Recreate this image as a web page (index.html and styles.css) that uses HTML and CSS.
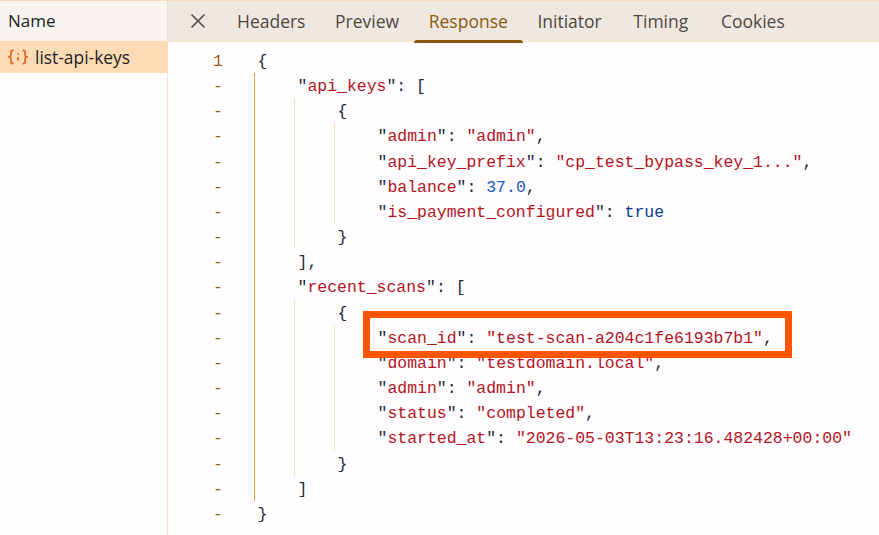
FILE: index.html
```html
<!DOCTYPE html>
<html lang="en">
<head>
    <meta charset="UTF-8">
    <meta name="viewport" content="width=device-width, initial-scale=1.0">
    <title>Network</title>
    <link rel="stylesheet" href="styles.css">
</head>
<body>
    <div class="panel">
        <div class="sidebar">
            <div class="side-head">Name</div>
            <div class="side-row">
                <svg class="json-icon" width="20" height="16" viewBox="0 0 20 16" fill="none" stroke="#f0642a" stroke-width="1.8">
                    <path d="M5.5 1.5H4.6C3.5 1.5 3 2.1 3 3.2V5.8C3 6.9 2.4 7.6 1 8C2.4 8.4 3 9.1 3 10.2V12.8C3 13.9 3.5 14.5 4.6 14.5H5.5"/>
                    <path d="M14.5 1.5H15.4C16.5 1.5 17 2.1 17 3.2V5.8C17 6.9 17.6 7.6 19 8C17.6 8.4 17 9.1 17 10.2V12.8C17 13.9 16.5 14.5 15.4 14.5H14.5"/>
                    <path d="M10 4.2V5.8M10 8V11.6"/>
                </svg>
                <span>list-api-keys</span>
            </div>
        </div>
        <div class="main">
            <div class="tabs">
                <svg class="close" width="16" height="16" viewBox="0 0 16 16" fill="none" stroke="#55504a" stroke-width="1.7"><path d="M1.5 1.5L14.5 14.5M14.5 1.5L1.5 14.5"/></svg>
                <div class="tab">Headers</div>
                <div class="tab">Preview</div>
                <div class="tab active">Response</div>
                <div class="tab">Initiator</div>
                <div class="tab timing">Timing</div>
                <div class="tab cookies">Cookies</div>
            </div>
            <div class="code">
                <div class="line"><span class="num">1</span><span class="text">{</span></div>
                <div class="line"><span class="num">-</span><i class="guide on"></i><span class="text">"<b class="k">api_keys</b>": [</span></div>
                <div class="line"><span class="num">-</span><i class="guide on"></i><i class="guide"></i><span class="text">{</span></div>
                <div class="line"><span class="num">-</span><i class="guide on"></i><i class="guide"></i><i class="guide"></i><span class="text">"<b class="k">admin</b>": <b class="k">"admin"</b>,</span></div>
                <div class="line"><span class="num">-</span><i class="guide on"></i><i class="guide"></i><i class="guide"></i><span class="text">"<b class="k">api_key_prefix</b>": <b class="k">"cp_test_bypass_key_1..."</b>,</span></div>
                <div class="line"><span class="num">-</span><i class="guide on"></i><i class="guide"></i><i class="guide"></i><span class="text">"<b class="k">balance</b>": <b class="n">37.0</b>,</span></div>
                <div class="line"><span class="num">-</span><i class="guide on"></i><i class="guide"></i><i class="guide"></i><span class="text">"<b class="k">is_payment_configured</b>": <b class="t">true</b></span></div>
                <div class="line"><span class="num">-</span><i class="guide on"></i><i class="guide"></i><span class="text">}</span></div>
                <div class="line"><span class="num">-</span><i class="guide on"></i><span class="text">],</span></div>
                <div class="line"><span class="num">-</span><i class="guide on"></i><span class="text">"<b class="k">recent_scans</b>": [</span></div>
                <div class="line"><span class="num">-</span><i class="guide on"></i><i class="guide"></i><span class="text">{</span></div>
                <div class="line"><span class="num">-</span><i class="guide on"></i><i class="guide"></i><i class="guide"></i><span class="text">"<b class="k">scan_id</b>": <b class="k">"test-scan-a204c1fe6193b7b1"</b>,</span></div>
                <div class="line"><span class="num">-</span><i class="guide on"></i><i class="guide"></i><i class="guide"></i><span class="text">"<b class="k">domain</b>": <b class="k">"testdomain.local"</b>,</span></div>
                <div class="line"><span class="num">-</span><i class="guide on"></i><i class="guide"></i><i class="guide"></i><span class="text">"<b class="k">admin</b>": <b class="k">"admin"</b>,</span></div>
                <div class="line"><span class="num">-</span><i class="guide on"></i><i class="guide"></i><i class="guide"></i><span class="text">"<b class="k">status</b>": <b class="k">"completed"</b>,</span></div>
                <div class="line"><span class="num">-</span><i class="guide on"></i><i class="guide"></i><i class="guide"></i><span class="text">"<b class="k">started_at</b>": <b class="k">"2026-05-03T13:23:16.482428+00:00"</b></span></div>
                <div class="line"><span class="num">-</span><i class="guide on"></i><i class="guide"></i><span class="text">}</span></div>
                <div class="line"><span class="num">-</span><i class="guide on"></i><span class="text">]</span></div>
                <div class="line"><span class="num">-</span><span class="text">}</span></div>
                <div class="highlight"></div>
            </div>
        </div>
    </div>
</body>
</html>
```

FILE: styles.css
```css
html, body {
    height: 100%;
}
body {
    margin: 0;
    overflow: hidden;
    background-color: #fffdff;
    font-family: "Open Sans", Arial, sans-serif;
    color: #1f1f1f;
}
.panel {
    display: flex;
    height: 100%;
    box-sizing: border-box;
    border-top: 1px solid #fddcb5;
}
.sidebar {
    flex: none;
    width: 167px;
    border-right: 1px solid #fde0c0;
}
.side-head {
    height: 40px;
    padding-left: 8px;
    line-height: 40px;
    font-size: 17px;
    background-color: #f8f4ef;
}
.side-row {
    display: flex;
    align-items: center;
    gap: 7px;
    height: 32px;
    padding-left: 8px;
    font-size: 17.4px;
    background-color: #fddcb5;
}
.json-icon {
    flex: none;
}
.main {
    flex: 1;
    min-width: 0;
}
.tabs {
    display: flex;
    align-items: center;
    height: 41px;
    box-sizing: border-box;
    padding-left: 22px;
    border-bottom: 1px solid #fde0c0;
    background-color: #efe8e1;
}
.close {
    flex: none;
    margin-right: 16.2px;
}
.tab {
    position: relative;
    padding: 0 14.8px;
    line-height: 42px;
    font-size: 17.5px;
    font-weight: 500;
    color: #4f4840;
}
.tab.active {
    color: #8a5a10;
}
.tab.active::after {
    content: "";
    position: absolute;
    left: 0;
    right: 0;
    bottom: -1px;
    height: 3px;
    border-radius: 3px 3px 0 0;
    background-color: #8a5a10;
}
.timing {
    margin-left: 2px;
}
.cookies {
    margin-left: 3px;
}
.code {
    position: relative;
    padding-top: 6px;
    font-family: "Liberation Mono", monospace;
    font-size: 16.48px;
}
.line {
    display: flex;
    height: 25.17px;
    line-height: 25.17px;
    white-space: pre;
}
.num {
    flex: none;
    width: 86px;
    box-sizing: border-box;
    padding-top: 1px;
    padding-right: 31px;
    text-align: right;
    color: #9a5b0a;
}
.guide {
    flex: none;
    width: 40px;
    box-sizing: border-box;
    border-left: 1px solid #fddcb5;
}
.guide.on {
    border-left-color: #e8a24a;
}
.text {
    padding-top: 1px;
    padding-left: 3.5px;
    color: #1d2a3a;
}
.text b {
    font-weight: normal;
}
.k {
    color: #b3141d;
}
.n {
    color: #1a56c4;
}
.t {
    color: #0b3f91;
}
.highlight {
    position: absolute;
    left: 195px;
    top: 269px;
    width: 415px;
    height: 33px;
    border: 7px solid #ff5500;
}
```
